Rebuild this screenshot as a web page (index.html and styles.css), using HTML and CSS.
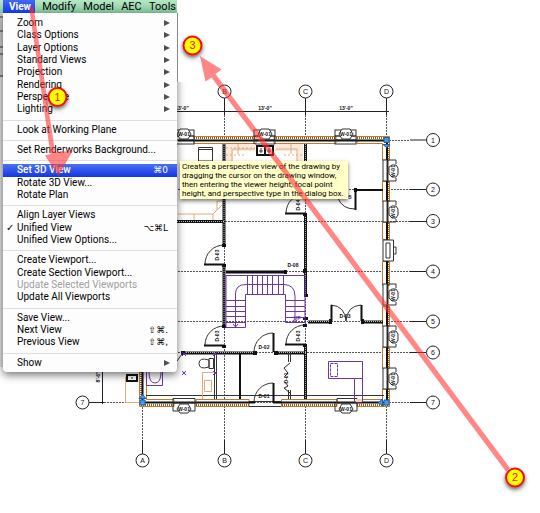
FILE: index.html
```
<!DOCTYPE html>
<html lang="en">
<head>
<meta charset="utf-8">
<title>View menu</title>
<link rel="stylesheet" href="styles.css">
</head>
<body>
<main class="workspace">
<svg class="plan" width="540" height="513" viewBox="0 0 540 513" aria-label="Floor plan">
  <defs>
    <g id="win"><rect x="-11" y="-9" width="21" height="6" class="thin"/><rect x="-11" y="-3" width="21" height="8" class="thin"/><path d="M-11 1H10" class="line"/><path d="M-7-5L-4-10H4L7-5L4 0H-4Z" class="thin paper"/><text x="0" y="-3" class="tag">W-01</text></g>
    <g id="winr"><rect x="-4" y="-11" width="4" height="21" class="thin paper"/><path d="M1-11H9V-7M1 10H9V7M1-11V10" class="thin"/><path d="M2-4L5-6H9L11-3V3L9 6H5L2 3Z" class="thin paper"/><text class="tag" transform="translate(8 0) rotate(-90)">W-01</text></g>
    <g id="door"><path d="M-19 0A19 19 0 0 1 0-19" class="thin"/><path d="M-20 .5H0" class="wall"/><path d="M-2-20h4v3h-4zM-2 0h4v3h-4z" fill="#111"/></g>
  </defs>
  <rect class="app-edge" y="13" width="3" height="64"/>
  <rect class="edge" y="77" width="3" height="290"/>
  <path d="M0 17H3M0 31H3M0 47H3M0 54H3M0 76H3" class="thin"/>

  <!-- grid lines and dimensions -->
  <path class="line" d="M170 111.500H389M224.500 98V115M305.500 98V115M386.500 98V115M410 140H426M410 189.500H426M410 221.500H426M410 271.500H426M410 321.500H426M410 352.500H426M410 402.500H426M89 402.500H104M102.500 372V404M142.500 440V454M224.500 440V454M305.500 440V454M386.500 440V454"/>
  <path class="grid" d="M224.500 115V440M305.500 115V440M386.500 115V440M142.500 407V440M389 140.500H410M178 189.500H410M225 221.500H410M178 271.500H410M178 321.500H410M178 352.500H410M104 402.500H410"/>
  <g class="bubble">
    <circle cx="224.500" cy="91.500" r="6.500"/><circle cx="305.500" cy="91.500" r="6.500"/><circle cx="386.500" cy="91.500" r="6.500"/>
    <circle cx="142.500" cy="460.500" r="6.500"/><circle cx="224.500" cy="460.500" r="6.500"/><circle cx="305.500" cy="460.500" r="6.500"/><circle cx="386.500" cy="460.500" r="6.500"/>
    <circle cx="433" cy="140" r="6.500"/><circle cx="433" cy="189.500" r="6.500"/><circle cx="433" cy="221" r="6.500"/><circle cx="433" cy="271.500" r="6.500"/><circle cx="433" cy="321.500" r="6.500"/><circle cx="433" cy="352.500" r="6.500"/><circle cx="433" cy="402.500" r="6.500"/><circle cx="82.500" cy="402.500" r="6.500"/>
  </g>
  <g class="mark">
    <text x="224.500" y="94">B</text><text x="305.500" y="94">C</text><text x="386.500" y="94">D</text>
    <text x="142.500" y="463">A</text><text x="224.500" y="463">B</text><text x="305.500" y="463">C</text><text x="386.500" y="463">D</text>
    <text x="433" y="143">1</text><text x="433" y="192">2</text><text x="433" y="224">3</text><text x="433" y="274">4</text><text x="433" y="324">5</text><text x="433" y="355">6</text><text x="433" y="405">7</text><text x="82.500" y="405">7</text>
  </g>
  <g class="tag">
    <text x="182" y="110">13'-0"</text><text x="265" y="110">13'-0"</text><text x="346" y="110">13'-0"</text>
    <text transform="translate(100 377) rotate(-90)">8'-6"</text>
  </g>

  <!-- outer walls -->
  <g class="brick">
    <path d="M194 136.500H256V143.500H194ZM274 136.500H336V143.500H274ZM357 136.500H389.500V160H382.500V143.500H357Z"/>
    <path d="M382.500 181.500h7v20h-7zM382.500 222.500h7v17h-7zM382.500 261.500h7v24h-7zM382.500 306.500h7v20h-7zM382.500 347.500h7v21h-7z"/>
    <path d="M382.500 389H389.500V406.500H357V399.500H382.500ZM281.500 399.500H337V406.500H281.500ZM196 399.500H249V406.500H196ZM139.500 370V406.500H174V399.500H146.500V370Z"/>
  </g>
  <path class="hatch" d="M194 138H256M274 138H336M357 138H388M388 138V160M388 182V201M388 223V239M388 262V285M388 307V326M388 348V368M388 389V405M388 405H357M337 405H281M249 405H196M174 405H141M141 405V370"/>
  <path class="wall" d="M178 140.500H387V402.500H281M249 402.500H142.500V370"/>
  <path class="thin" d="M146 395.500H384M249 406.500H281M249 401.500H281"/>
  <use href="#win" x="184" y="139"/><use href="#win" x="265" y="139"/><use href="#win" x="346" y="139"/>
  <use href="#winr" x="387" y="171"/><use href="#winr" x="387" y="212"/><use href="#winr" x="387" y="295"/><use href="#winr" x="387" y="337"/><use href="#winr" x="387" y="379"/>
  <path class="thin paper" d="M383 240H393.500V261H383ZM386 243H390V258H386ZM393.500 247H396V254H393.500"/>
  <g class="thin"><path d="M173 398.500H195V403H173ZM173 403V411H195V403M337 398.500H357V403H337ZM335 403V411H357V403"/><path class="paper" d="M177 409L180 404H188L191 409L188 413H180ZM339 409L342 404H350L353 409L350 413H342Z"/></g>
  <g class="tag"><text x="184" y="411">W-01</text><text x="346" y="411">W-01</text></g>

  <!-- kitchen and upper rooms -->
  <path class="tint" d="M226 144H255V151H233V161H226ZM275 144H303V161H297V151H275Z"/>
  <path class="cabinet" d="M232 161V149H255M276 149H297V161M238 144V154M291 144V154M178 214H194V220M194 214H213L222 205M213 214V220M217 210V201H222"/>
  <path class="cabinet-dash" d="M226 155H246M284 155H303M226 148H255"/>
  <path class="thin" d="M198.500 147.500H212.500V161H198.500ZM198 149.500H212"/>
  <path d="M257 146H273V155H257ZM265 146V155" fill="#fff" stroke="#111" stroke-width="2"/><path d="M259 151H263M267 151H271M261 148V153M269 148V153" class="thin"/>
  <path class="cavity" d="M224 144V245M177 221.500H225M224 267V326M305.500 144V162M305.500 215V295M226 272H285M305.500 345V399M182 353H254M275 353H306M308 322H331M361 322H383"/>
  <path class="core" d="M224 144V245M177 221.500H225M224 267V326M305.500 144V162M305.500 215V295M305.500 345V399M182 352.500H254M275 352.500H306M308 321.500H331M361 321.500H383"/>
  <path class="wall" d="M240 353V399M355 190H383"/>
  <path d="M303 269h4v4h-4zM284 270h3v4h-3zM304 294h4v3h-4zM303 317h5v3h-5zM181 351h4v4h-4zM253 351h4v4h-4zM274 351h4v4h-4zM354 188h3v4h-3zM329 319h3v5h-3zM361 319h3v5h-3z" fill="#111"/>
  <use href="#door" x="224" y="264"/><use href="#door" x="224" y="345"/><use href="#door" x="305" y="213"/><use href="#door" x="305" y="344"/>
  <path class="thin" d="M254 352A19 19 0 0 1 273 333M254 402A19 19 0 0 1 273 383M338 198Q342 209 355 209M331 305Q345 306 346 321Q347 306 361 305"/>
  <path class="leaf" d="M273.500 333V352M273.500 383V402M355.500 190V210M331.500 305V321M361.500 305V321M249 402.500H255M273 402.500H281"/>
  <path class="thin" d="M214.500 353V399M216.500 353V399M288.500 353V362M290.500 353V362M288.500 390V399M290.500 390V399M177 361L182 354"/>
  <path class="line" d="M290 363L284 368L288 373L285 376M285 382L288 386L284 388L290 393"/>
  <g class="tag">
    <text x="293" y="267">D-08</text><text x="264" y="349">D-02</text><text x="264" y="398">D-01</text><text x="345" y="318">D-03</text><text x="346" y="199">D-05</text>
    <text transform="translate(219 255) rotate(-90)">D-03</text><text transform="translate(219 336) rotate(-90)">D-03</text><text transform="translate(300 205) rotate(-90)">D-04</text><text transform="translate(300 336) rotate(-90)">D-03</text><text transform="translate(288 378) rotate(-90)">D-01</text>
  </g>

  <!-- stair, desk and bath fixtures -->
  <g class="violet">
    <path d="M226 275.500H305V322.500H285.500V294.500H245.500V327.500H226Z"/>
    <path d="M226 300.500H245M226 306.500H245M226 311.500H245M226 316.500H245M226 322.500H245M285 300.500H305M285 306.500H305M285 311.500H305M285 317.500H305M247.500 276V294M252.500 276V294M257.500 276V294M262.500 276V294M267.500 276V294M272.500 276V294M278.500 276V294M283.500 276V294"/>
    <path d="M235.500 327V294Q235.500 284.500 246 284.500H284Q295 285 295 296V322M233 324L235.500 327L238 324M293 320L295 323L297 320"/>
    <path d="M328.500 361.500H362.500V402H354.500V378.500H328.500ZM354.500 378.500H362.500"/><path d="M330.500 363.500H337.500V376.500H330.500Z" stroke-dasharray="3 1"/>
    <path d="M146.500 370V385.500H162.500V370M149 372Q149 383 155 383Q161 383 161 372M182 352L186 356M186 352L182 356M213 352L217 356M217 352L213 356M182 371L186 375M186 371L182 375M213 371L217 375M217 371L213 375"/>
  </g>
  <text x="297" y="320" class="tag violet-text">UP</text>
  <path class="cabinet" d="M202.500 399V372.500H213.500M204.500 380.500H211.500V391.500H204.500ZM125.500 377V402.500H139"/><rect x="356" y="399" width="6" height="3" fill="#ffd19b"/>
  <path class="thin" d="M209 358.500H213.500V368.500H209ZM209 360Q199 357 199 363.500Q199 370 209 367Z"/>
  <path d="M127 375H137V381H127Z" fill="#fff" stroke="#111" stroke-width="2"/><path d="M131 378H133" class="line"/>
  <g class="handle"><path d="M384 137.500h5v5h-5zM383 144.500h7l-3.500 3zM140 400h5v5h-5zM139 398.500h7l-3.500-4zM384 400h5v5h-5zM382.500 399v7l-4-3.500z"/></g>
</svg>

<div class="menu-area">
  <nav class="menubar" aria-label="Main menu">
    <button class="current">View</button><button>Modify</button><button>Model</button><button>AEC</button><button>Tools</button>
  </nav>
  <div class="menu" role="menu">
    <button role="menuitem">Zoom<i class="more"></i></button>
    <button role="menuitem">Class Options<i class="more"></i></button>
    <button role="menuitem">Layer Options<i class="more"></i></button>
    <button role="menuitem">Standard Views<i class="more"></i></button>
    <button role="menuitem">Projection<i class="more"></i></button>
    <button role="menuitem">Rendering<i class="more"></i></button>
    <button role="menuitem">Perspective<i class="more"></i></button>
    <button role="menuitem">Lighting<i class="more"></i></button>
    <hr>
    <button role="menuitem">Look at Working Plane</button>
    <hr>
    <button role="menuitem">Set Renderworks Background...</button>
    <hr>
    <button role="menuitem" class="active">Set 3D View<kbd>⌘0</kbd></button>
    <button role="menuitem">Rotate 3D View...</button>
    <button role="menuitem">Rotate Plan</button>
    <hr>
    <button role="menuitem">Align Layer Views</button>
    <button role="menuitem" class="checked">Unified View<kbd>⌥⌘L</kbd></button>
    <button role="menuitem">Unified View Options...</button>
    <hr>
    <button role="menuitem">Create Viewport...</button>
    <button role="menuitem">Create Section Viewport...</button>
    <button role="menuitem" disabled>Update Selected Viewports</button>
    <button role="menuitem">Update All Viewports</button>
    <hr>
    <button role="menuitem">Save View...</button>
    <button role="menuitem">Next View<kbd>⇧⌘.</kbd></button>
    <button role="menuitem">Previous View<kbd>⇧⌘,</kbd></button>
    <hr>
    <button role="menuitem">Show<i class="more"></i></button>
  </div>
</div>

<div class="tooltip" role="tooltip">Creates a perspective view of the drawing by<br>dragging the cursor on the drawing window,<br>then entering the viewer height, focal point<br>height, and perspective type in the dialog box.</div>

<svg class="notes" width="540" height="513" viewBox="0 0 540 513" aria-label="Numbered steps">
  <defs><filter id="drop" x="-50%" y="-50%" width="200%" height="200%"><feDropShadow dx="0" dy="2" stdDeviation="2" flood-opacity=".65"/></filter></defs>
  <rect x="178" y="0" width="14" height="82" fill="#fff"/>
  <path class="edge-line" d="M177.500 13V82"/>
  <path class="arrow" d="M29 7L33.500 6.500L55 152L72.500 151L58.500 176L45 155.500L50.500 154Z"/>
  <path class="arrow" d="M510 468L506 471.500L211.500 77.500L205.500 81.500L200 56L221.500 69.500L215.500 74Z"/>
  <g class="step">
    <circle cx="57.500" cy="97" r="9"/><circle cx="192.500" cy="45.500" r="9"/><circle cx="515" cy="477.500" r="9"/>
    <text x="57.500" y="101">1</text><text x="192.500" y="49">3</text><text x="515" y="481">2</text>
  </g>
</svg>
</main>
</body>
</html>
```

FILE: styles.css
```
* { box-sizing: border-box; }

body {
  margin: 0;
  background: #fff;
  color: #000;
  font-family: "Open Sans", "Noto Sans", sans-serif;
  font-family: Roboto, "Noto Sans", sans-serif;
  font-size: 10px;
}

.workspace {
  position: relative;
  min-height: 100vh;
  overflow: hidden;
}

.plan, .notes {
  position: absolute;
  top: 0;
  left: 0;
}

.notes { pointer-events: none; }

button {
  border: 0;
  margin: 0;
  padding: 0;
  background: none;
  color: inherit;
  font: inherit;
  text-align: left;
}

.menu-area {
  position: relative;
  width: 177px;
}

.menubar {
  display: flex;
  justify-content: space-between;
  height: 13px;
  padding: 0 1px 0 3px;
  background: linear-gradient(#b5e8c5, #86c99f);
  line-height: 13px;
  white-space: nowrap;
}

.menubar button { font-size: 11px; }

.menubar .current {
  padding: 0 4px 0 6px;
  background: linear-gradient(#4468f2, #1338e0);
  color: #fff;
  font-size: 10px;
  font-weight: 700;
}

.menu {
  display: flex;
  flex-direction: column;
  min-height: 359px;
  margin-left: 3px;
  padding: 4px 0 3px;
  border-radius: 0 0 4px 4px;
  background: #fdfdfd;
  box-shadow: 0 3px 9px rgba(0, 0, 0, .55);
}

.menu button {
  position: relative;
  display: flex;
  flex: 1;
  align-items: center;
  justify-content: space-between;
  padding: 0 9px 0 14px;
  line-height: 12px;
}

.menu hr {
  width: 100%;
  height: 1px;
  margin: 4px 0 3px;
  border: 0;
  background: #dedede;
}

.menu .active {
  background: linear-gradient(#4b70f5, #1437df);
  color: #fff;
  font-weight: 500;
}

.menu button:disabled { color: #a0a0a0; }

.checked::before {
  content: "✓";
  position: absolute;
  left: 3px;
  font-family: "DejaVu Sans", sans-serif;
}

.more {
  margin-right: -2px;
  border: solid transparent;
  border-width: 3px 0 3px 6px;
  border-left-color: #505050;
}

kbd { font-family: "DejaVu Sans", sans-serif; font-size: 9px; }

.tooltip {
  position: absolute;
  top: 161px;
  left: 180px;
  padding: 1px 4px 1px 2px;
  background: #ffffc8;
  box-shadow: 0 2px 4px rgba(0, 0, 0, .55);
  font-size: 8px;
  line-height: 9px;
  white-space: nowrap;
}

.app-edge { fill: #ccc; }
.edge { fill: #e2e2e2; }
.edge-line { fill: none; stroke: #888; stroke-width: 1; }
.thin { fill: none; stroke: #333; stroke-width: 1; }
.paper { fill: #fff; }
.line { fill: none; stroke: #222; stroke-width: 1; }
.wall { fill: none; stroke: #111; stroke-width: 2; }
.leaf { fill: none; stroke: #111; stroke-width: 2; }
.grid { fill: none; stroke: #555; stroke-width: 1; stroke-dasharray: 2 1; }
.bubble { fill: #fff; stroke: #222; stroke-width: 1; }
.brick { fill: #fff; stroke: #c27a2c; stroke-width: 1; }
.hatch { fill: none; stroke: #9a5a1c; stroke-width: 2; stroke-dasharray: 1 1; }
.cavity { fill: none; stroke: #111; stroke-width: 3; }
.core { fill: none; stroke: #bbb; stroke-width: 1; stroke-dasharray: 1 1; }
.tint { fill: #fbeadb; }
.cabinet { fill: none; stroke: #e2aa7a; stroke-width: 1; }
.cabinet-dash { fill: none; stroke: #e2aa7a; stroke-width: 1; stroke-dasharray: 2 2; }
.violet { fill: none; stroke: #6a35a8; stroke-width: 1; }
.handle { fill: #3d9cf0; stroke: #1d5fa8; stroke-width: 1; }

.plan text {
  font-family: "Liberation Sans", sans-serif;
  text-anchor: middle;
  fill: #111;
}

.mark text { font-size: 7px; }
.tag { font-size: 5px; font-weight: 700; }
.plan .tag { stroke: none; }
.plan .violet-text { fill: #6a35a8; }

.arrow { fill: rgba(255, 48, 48, .58); }
.step circle { fill: #ff0; stroke: #f01010; stroke-width: 2; filter: url(#drop); }

.step text {
  fill: #f01010;
  font-family: "Liberation Sans", sans-serif;
  font-size: 11px;
  text-anchor: middle;
}
```
